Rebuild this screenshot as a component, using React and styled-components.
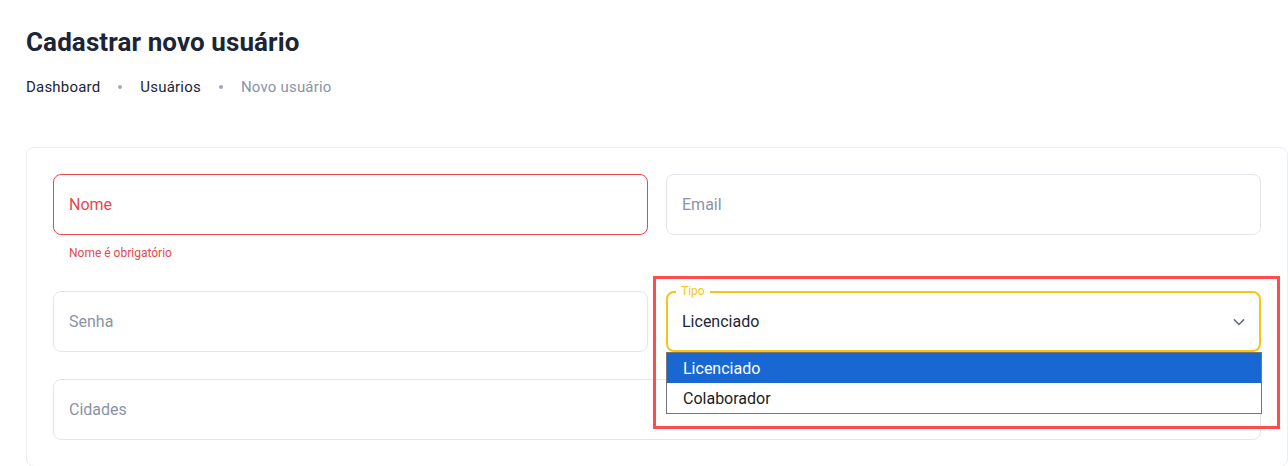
import styled, { createGlobalStyle } from 'styled-components';

const GlobalStyle = createGlobalStyle`
     body {
          margin: 0;
          background: #ffffff;
          font-family: Roboto, 'Liberation Sans', sans-serif;
     }
     * {
          box-sizing: border-box;
     }
`;

const colors = {
     text: '#1c2536',
     muted: '#8a94a6',
     border: '#e3e6ea',
     error: '#e5484d',
     focus: '#f5c518',
     highlight: '#1967d2',
};

const Page = styled.div`
     padding: 27px 0 0 26px;
     height: 466px;
     overflow: hidden;
`;

const Title = styled.h4`
     margin: 0;
     font-size: 26px;
     line-height: 31px;
     font-weight: 700;
     letter-spacing: 0.1px;
     color: ${colors.text};
`;

const Breadcrumbs = styled.nav`
     display: flex;
     align-items: center;
     gap: 18px;
     margin-top: 19px;
     font-size: 15px;
     line-height: 20px;
     letter-spacing: 0.2px;
`;

const Crumb = styled.span`
     color: ${({ $current }) => ($current ? colors.muted : colors.text)};
`;

const Dot = styled.span`
     width: 4px;
     height: 4px;
     border-radius: 50%;
     background: #a0a8b4;
`;

const Card = styled.section`
     margin-top: 50px;
     border: 1px solid #eceef1;
     border-radius: 8px;
     padding: 26px;
`;

const FormGrid = styled.div`
     display: grid;
     grid-template-columns: 1fr 1fr;
     column-gap: 18px;
     row-gap: 27px;
`;

const Field = styled.div`
     position: relative;
     grid-column: ${({ $wide }) => ($wide ? 'span 2' : 'auto')};
`;

const InputBox = styled.div`
     height: 61px;
     display: flex;
     align-items: center;
     padding: 0 15px;
     border: 1px solid ${({ $error }) => ($error ? colors.error : colors.border)};
     border-radius: 8px;
     font-size: 16px;
     color: ${({ $error }) => ($error ? colors.error : colors.muted)};
`;

const HelperText = styled.div`
     margin: 8px 0 0 16px;
     font-size: 12px;
     line-height: 21px;
     color: ${colors.error};
`;

const SelectBox = styled.div`
     position: relative;
     height: 61px;
     display: flex;
     align-items: center;
     justify-content: space-between;
     padding: 0 10px 0 14px;
     border: 2px solid ${colors.focus};
     border-radius: 8px;
     font-size: 16px;
     color: ${colors.text};
`;

const FloatingLabel = styled.span`
     position: absolute;
     left: 8px;
     top: -10px;
     padding: 0 5px;
     background: #ffffff;
     font-size: 12px;
     line-height: 16px;
     color: ${colors.focus};
`;

const OptionList = styled.ul`
     position: absolute;
     left: 0;
     right: -1px;
     top: 61px;
     margin: 0;
     padding: 0;
     list-style: none;
     background: #ffffff;
     border: 1px solid #767676;
     z-index: 2;
`;

const Option = styled.li`
     height: 30px;
     display: flex;
     align-items: center;
     padding-left: 16px;
     font-size: 16px;
     background: ${({ $active }) => ($active ? colors.highlight : '#ffffff')};
     color: ${({ $active }) => ($active ? '#ffffff' : '#1c1c1c')};
`;

const Annotation = styled.div`
     position: absolute;
     left: -13px;
     top: -15px;
     width: 627px;
     height: 153px;
     border: 3px solid #ff4d4f;
     pointer-events: none;
     z-index: 3;
`;

function Chevron() {
     return (
          <svg width="20" height="20" viewBox="0 0 24 24" fill="none">
               <path
                    d="M6.5 9.5l5.5 5.5 5.5-5.5"
                    stroke="#6c737f"
                    strokeWidth="2"
                    strokeLinecap="round"
                    strokeLinejoin="round"
               />
          </svg>
     );
}

const options = ['Licenciado', 'Colaborador'];

function App() {
     return (
          <Page>
               <GlobalStyle />
               <Title>Cadastrar novo usuário</Title>
               <Breadcrumbs>
                    <Crumb>Dashboard</Crumb>
                    <Dot />
                    <Crumb>Usuários</Crumb>
                    <Dot />
                    <Crumb $current>Novo usuário</Crumb>
               </Breadcrumbs>
               <Card>
                    <FormGrid>
                         <Field>
                              <InputBox $error>Nome</InputBox>
                              <HelperText>Nome é obrigatório</HelperText>
                         </Field>
                         <Field>
                              <InputBox>Email</InputBox>
                         </Field>
                         <Field>
                              <InputBox>Senha</InputBox>
                         </Field>
                         <Field>
                              <SelectBox>
                                   <FloatingLabel>Tipo</FloatingLabel>
                                   Licenciado
                                   <Chevron />
                              </SelectBox>
                              <OptionList>
                                   {options.map((option, index) => (
                                        <Option key={option} $active={index === 0}>
                                             {option}
                                        </Option>
                                   ))}
                              </OptionList>
                              <Annotation />
                         </Field>
                         <Field $wide>
                              <InputBox>Cidades</InputBox>
                         </Field>
                    </FormGrid>
               </Card>
          </Page>
     );
}

export default App;
